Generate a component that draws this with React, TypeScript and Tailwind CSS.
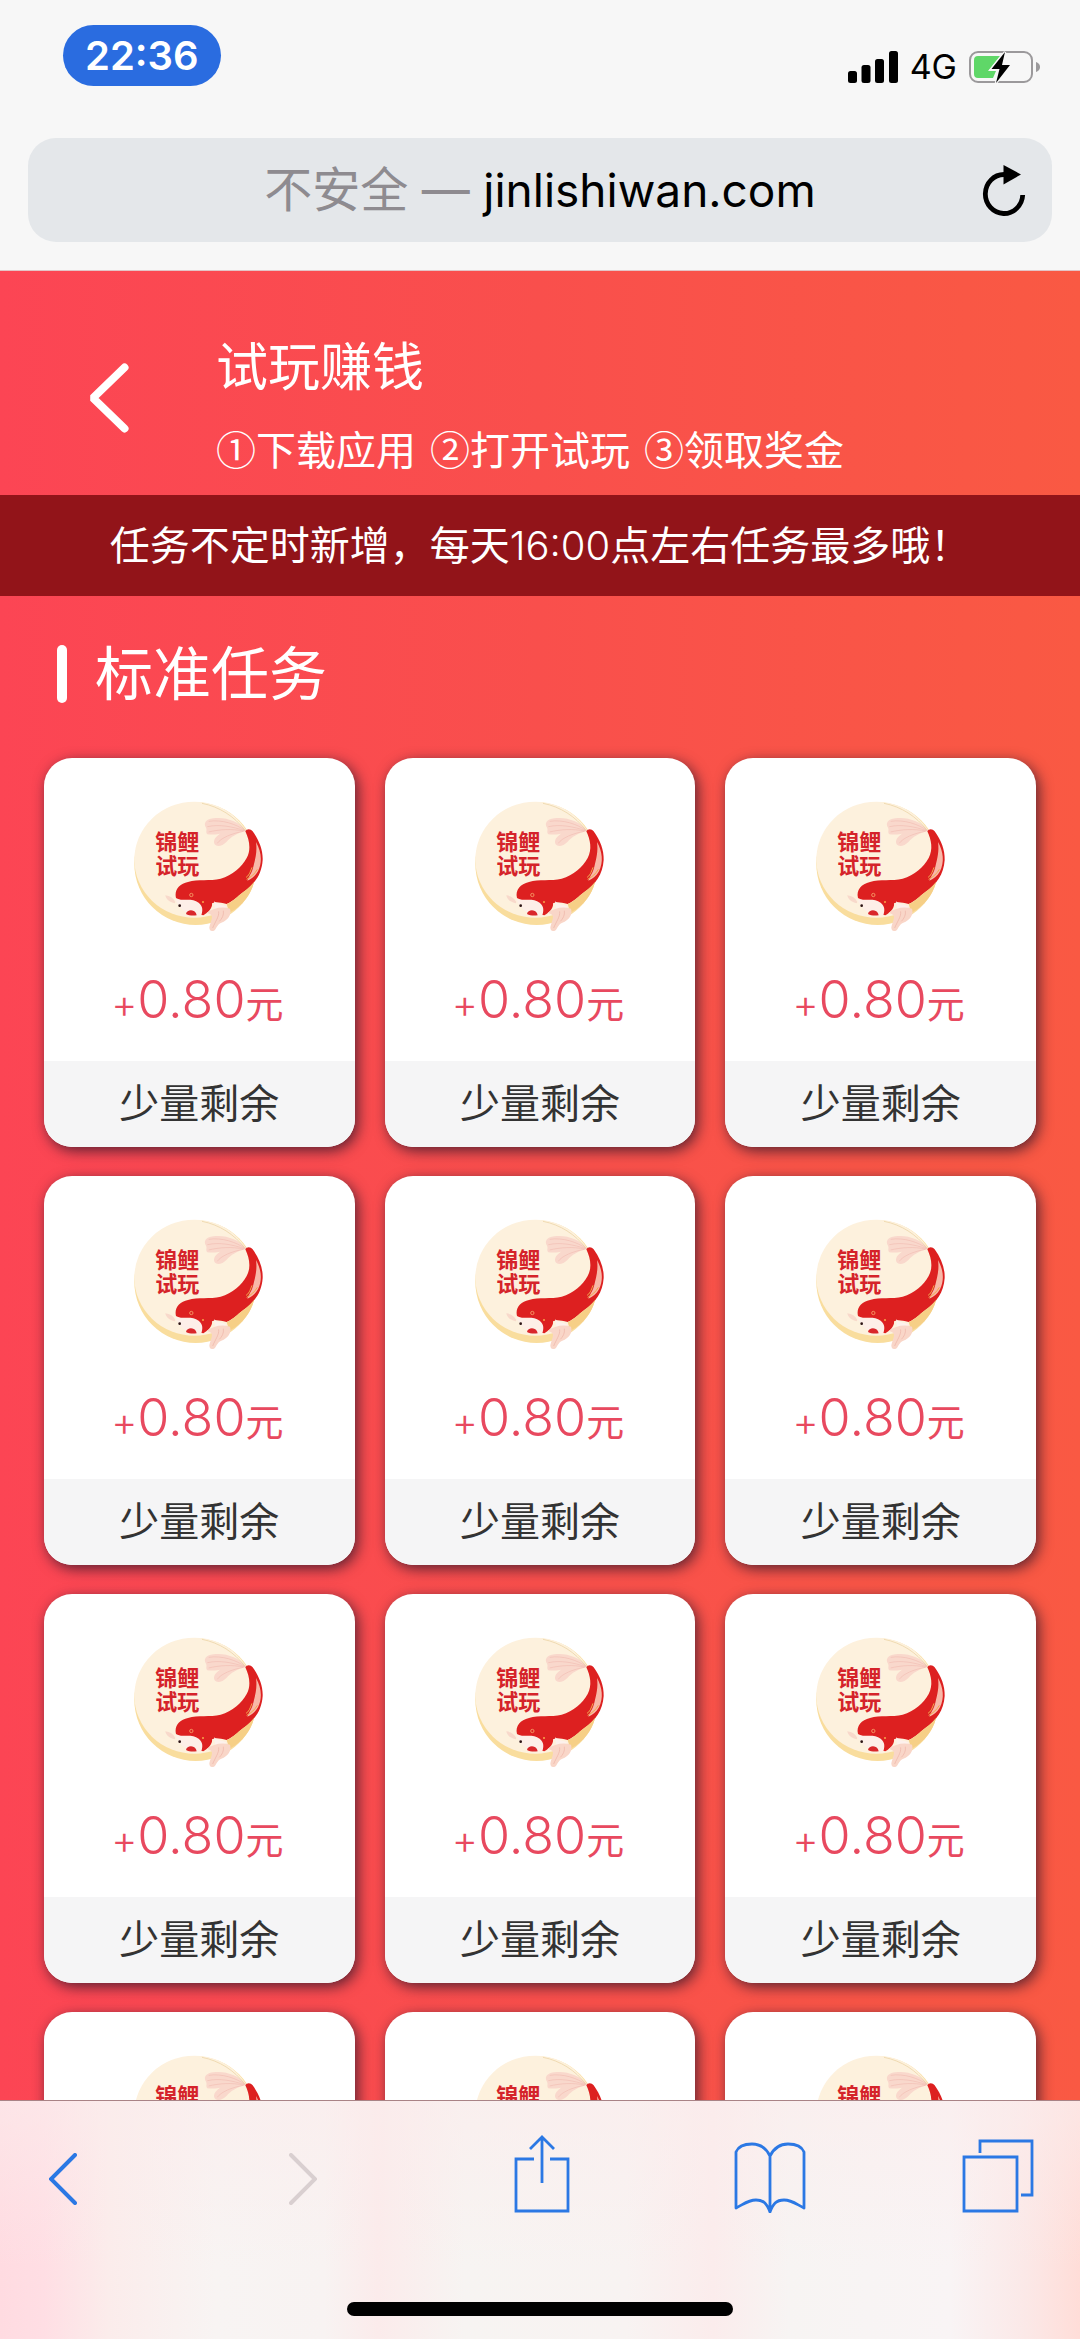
import type { ReactNode } from 'react'

const steps = ['①下载应用', '②打开试玩', '③领取奖金']

const tasks = Array.from({ length: 12 }, (_, i) => ({
  id: i + 1,
  reward: '0.80',
  status: '少量剩余',
}))

function SignalIcon() {
  return (
    <svg width="50" height="32" viewBox="0 0 50 32" aria-hidden="true">
      <rect x="0" y="20" width="9" height="12" rx="2.5" />
      <rect x="13.5" y="14" width="9" height="18" rx="2.5" />
      <rect x="27" y="8" width="9" height="24" rx="2.5" />
      <rect x="41" y="0" width="9" height="32" rx="2.5" />
    </svg>
  )
}

function BatteryIcon() {
  return (
    <svg width="71" height="34" viewBox="0 0 71 34" aria-hidden="true">
      <rect x="1" y="2" width="62" height="30" rx="8" fill="none" stroke="#9b999b" strokeWidth="2" />
      <path d="M67 12c3.500 1.500 4 3.500 4 5s-.5 3.500-4 5z" fill="#9b999b" />
      <path d="M9 6h22L19 21h8l-3 7H9a4 4 0 0 1-4-4V10a4 4 0 0 1 4-4z" fill="#5fd768" />
      <path d="M36 2L22.500 19h8L27 33l14-18h-8z" fill="#000" stroke="#f7f7f7" strokeWidth="2.500" paintOrder="stroke" />
    </svg>
  )
}

function ReloadIcon() {
  return (
    <svg width="44" height="52" viewBox="0 0 44 52" fill="none" aria-hidden="true">
      <path d="M22 10.500A18.700 19.500 0 1 0 40.700 31" stroke="#000" strokeWidth="4.800" />
      <path d="M21.500 1v19.500L39 10.500z" fill="#000" />
    </svg>
  )
}

function KoiLogo() {
  return (
    <svg width="132" height="132" viewBox="15 12 396 396" role="img" aria-label="锦鲤试玩">
      <circle cx="203" cy="203" r="184" fill="#f9dd9d" />
      <ellipse cx="199" cy="191" rx="180" ry="174" fill="#fdf1dd" />
      {/* tail */}
      <path d="M356 104C332 76 292 62 256 67c-24 3-30 16-22 28 4 8-2 12 4 20 14 2 26 0 38-2-14 10-22 20-16 32 8 10 24 4 36-8 12-14 30-26 60-33z" fill="#f9d8cc" />
      <path d="M242 76c40-6 82 8 110 28M238 92c36-8 76 0 112 12M242 108c32-8 68-10 106-3M268 142c10-16 44-30 78-36" fill="none" stroke="#eeb5ab" strokeWidth="1.500" />
      <path d="M222 22c52 10 98 40 128 80" fill="none" stroke="#e9cf9c" strokeWidth="2" />
      {/* body */}
      <path d="M352 106c4-8 16-8 22 0 20 28 31 56 30 86-3 44-24 72-58 96-18 14-28 26-50 36-22-6-34-8-44-2 2 12-8 26-26 36-20-2-38-34-82-52-6-24 10-42 36-48 30-10 66-2 98-10 36-10 62-34 78-62 14-26 8-54-4-80z" fill="#dd2020" />
      <path d="M384 138c16 28 20 60 6 88-8 14-18 22-32 28 6-16 14-24 18-42 6-24 12-46 8-74z" fill="#f8b8a8" />
      <path d="M354 244c8-4 12-14 18-30M356 250c14-8 24-16 32-30" fill="none" stroke="#f0a94e" strokeWidth="3" />
      <path d="M296 324c20-8 30-22 50-36 14-10 24-20 32-30-8 36-34 72-74 92z" fill="#f6cf86" />
      {/* head */}
      <path d="M142 308c24 8 50-4 70 12 14 12 12 24 8 38-36 2-66-14-78-50z" fill="#fdefe8" />
      <path d="M174 354c2-12 22-16 30-2l2 6c-14 2-24 0-32-4z" fill="#d9272b" />
      <circle cx="155" cy="329" r="4" fill="#2c1414" />
      <circle cx="190" cy="297" r="5" fill="#dd2020" stroke="#f6a56a" strokeWidth="2.500" />
      <circle cx="225" cy="318" r="3" fill="#f6a54a" />
      <path d="M140 322c-16-4-26-12-28-24 14 2 24 8 30 20z" fill="#f8d9cb" />
      {/* fins */}
      <path d="M258 316c10 10 26 10 38 16-8 10-22 12-34 8z" fill="#fdf1ec" />
      <path d="M236 350c20-14 46-20 70-12 6 18-6 34-26 42-14 6-14 18-22 24-10 4-14-2-14-10 2-12 8-22 8-32 0-6-8-10-16-12z" fill="#f9d6c8" />
      <path d="M272 346c2 16-10 30-18 50M286 344c2 14-4 24-12 32" stroke="#e9a79b" strokeWidth="1.500" fill="none" />
      <g fill="#d5232a" fontSize="66" fontWeight="700" fontFamily="'Noto Sans CJK SC', sans-serif">
        <text x="82" y="161">锦鲤</text>
        <text x="82" y="234">试玩</text>
      </g>
    </svg>
  )
}

function TaskCard({ id, reward, status }: { id: number; reward: string; status: string }) {
  return (
    <a
      href={`#task-${id}`}
      className="flex flex-col overflow-hidden rounded-[28px] bg-white shadow-[3px_4px_14px_rgba(40,20,40,0.75)]"
    >
      <div className="flex h-[303px] flex-col items-center pt-[42px]">
        <KoiLogo />
        <p className="mt-8 flex items-baseline pr-1 text-[#e8495f] leading-[72px]">
          <span className="text-[40px] font-light">+</span>
          <span className="text-[52px] font-light">{reward}</span>
          <span className="text-[38px]">元</span>
        </p>
      </div>
      <div className="bg-[#f5f5f6] text-center text-[40px] leading-[86px] text-[#333]">{status}</div>
    </a>
  )
}

function ToolButton({ label, className, disabled, children }: { label: string; className: string; disabled?: boolean; children: ReactNode }) {
  return (
    <button type="button" aria-label={label} disabled={disabled} className={className}>
      {children}
    </button>
  )
}

export default function App() {
  return (
    <div lang="zh-CN" className="flex h-screen flex-col overflow-hidden bg-[#f7f7f7] font-['Inter','Noto_Sans_CJK_SC',sans-serif]">
      <header className="shrink-0 border-b border-[#e3c4c6] px-7 pb-7">
        <div className="flex h-[138px] items-start justify-between pt-[25px] pr-3 pl-[35px]">
          <span className="rounded-full bg-[#2a6ce0] px-[22px] text-[40px] leading-[61px] font-semibold text-white">22:36</span>
          <div className="mt-6 flex items-center gap-3">
            <SignalIcon />
            <span className="text-[34px] leading-9">4G</span>
            <BatteryIcon />
          </div>
        </div>
        <div className="flex items-center rounded-[28px] bg-[#e4e7ea] pr-[26px] pl-[70px]">
          <button type="button" className="flex-1 text-center text-[46px] leading-[104px]">
            <span className="text-[48px] text-[#8e8b90]">不安全 — </span>jinlishiwan.com
          </button>
          <button type="button" aria-label="重新载入">
            <ReloadIcon />
          </button>
        </div>
      </header>

      <main className="min-h-0 flex-1 overflow-hidden bg-linear-to-r from-[#fc4554] via-[#f94f4c] to-[#f95943] text-white">
        <div className="flex items-start pt-[60px] pb-4 pl-[88px]">
          <button type="button" aria-label="返回" className="mt-8">
            <svg width="41" height="70" viewBox="0 0 41 70" fill="none" aria-hidden="true">
              <path d="M36.500 4.500L5 35l31.500 30.500" stroke="#fff" strokeWidth="8" strokeLinecap="round" strokeLinejoin="bevel" />
            </svg>
          </button>
          <div className="ml-[87px]">
            <h1 className="text-[52px] leading-[74px]">试玩赚钱</h1>
            <p className="mt-3 flex gap-[14px] font-['Noto_Sans_CJK_SC',sans-serif] text-[40px] leading-[62px]">
              {steps.map((step) => (
                <span key={step}>{step}</span>
              ))}
            </p>
          </div>
        </div>
        <p className="bg-[#921419] text-center text-[40px] leading-[101px]">任务不定时新增，每天<span className="font-light">16:00</span>点左右任务最多哦！</p>

        <section>
          <h2 className="flex items-center gap-7 pt-[38px] pl-[57px] text-[58px] leading-[80px]">
            <span className="h-[58px] w-[10px] rounded-full bg-white" />
            标准任务
          </h2>
          <div className="mt-11 grid grid-cols-3 gap-x-[30px] gap-y-[29px] px-11 pb-8">
            {tasks.map((task) => (
              <TaskCard key={task.id} {...task} />
            ))}
          </div>
        </section>
      </main>

      <footer className="shrink-0 border-t border-[#a98386] bg-[linear-gradient(to_bottom,rgba(251,236,236,0.6),rgba(251,236,236,0)_70%),linear-gradient(to_right,#ffdbe1,#ffdee4_4%,#fbeceb_10%,#f8f4f3_20%,#f8f3f2_30%,#fbebeb_35%,#f7f4f2_43%,#f8f3f2_58%,#fbecec_66%,#f7f4f3_73%,#f9f4f5_88%,#fbe8e7_95%,#ffddd8)] pt-8 pb-[23px]">
        <nav className="flex h-20 items-end justify-between pr-[46px] pl-[49px] text-[#2b78e4]">
          <ToolButton label="后退" className="flex w-[72px] pb-2">
            <svg width="28" height="52" viewBox="0 0 28 52" fill="none" aria-hidden="true">
              <path d="M26 2L2 26l24 24" stroke="currentColor" strokeWidth="4" strokeLinecap="round" />
            </svg>
          </ToolButton>
          <ToolButton label="前进" disabled className="flex w-[72px] pb-2 pl-3 text-[#d9cfd0]">
            <svg width="28" height="52" viewBox="0 0 28 52" fill="none" aria-hidden="true">
              <path d="M2 2l24 24L2 50" stroke="currentColor" strokeWidth="4" strokeLinecap="round" />
            </svg>
          </ToolButton>
          <ToolButton label="分享" className="flex w-[72px] justify-center">
            <svg width="56" height="80" viewBox="0 0 56 80" fill="none" stroke="currentColor" strokeWidth="2.800" aria-hidden="true">
              <path d="M20 26H2v52h52V26H36M28 50V4M16 16L28 4l12 12" />
            </svg>
          </ToolButton>
          <ToolButton label="书签" className="flex w-[72px] justify-center">
            <svg width="72" height="72" viewBox="0 -1 72 72" fill="none" stroke="currentColor" strokeWidth="2.800" strokeLinejoin="round" aria-hidden="true">
              <path d="M36 14C32 6 26 2 18 2S4 5 2 10v56c8-4 12-8 20-8 8 0 11 4 14 12 3-8 6-12 14-12s12 4 20 8V10C68 5 62 2 54 2S40 6 36 14zM36 14v56" />
            </svg>
          </ToolButton>
          <ToolButton label="标签页" className="flex w-[72px] justify-center">
            <svg width="72" height="74" viewBox="0 0 72 74" fill="none" stroke="currentColor" strokeWidth="2.800" aria-hidden="true">
              <path d="M2 18h53v54H2zM18 14V2h52v54H59" />
            </svg>
          </ToolButton>
        </nav>
        <div className="mx-auto mt-[89px] h-[14px] w-[386px] rounded-full bg-black" />
      </footer>
    </div>
  )
}
